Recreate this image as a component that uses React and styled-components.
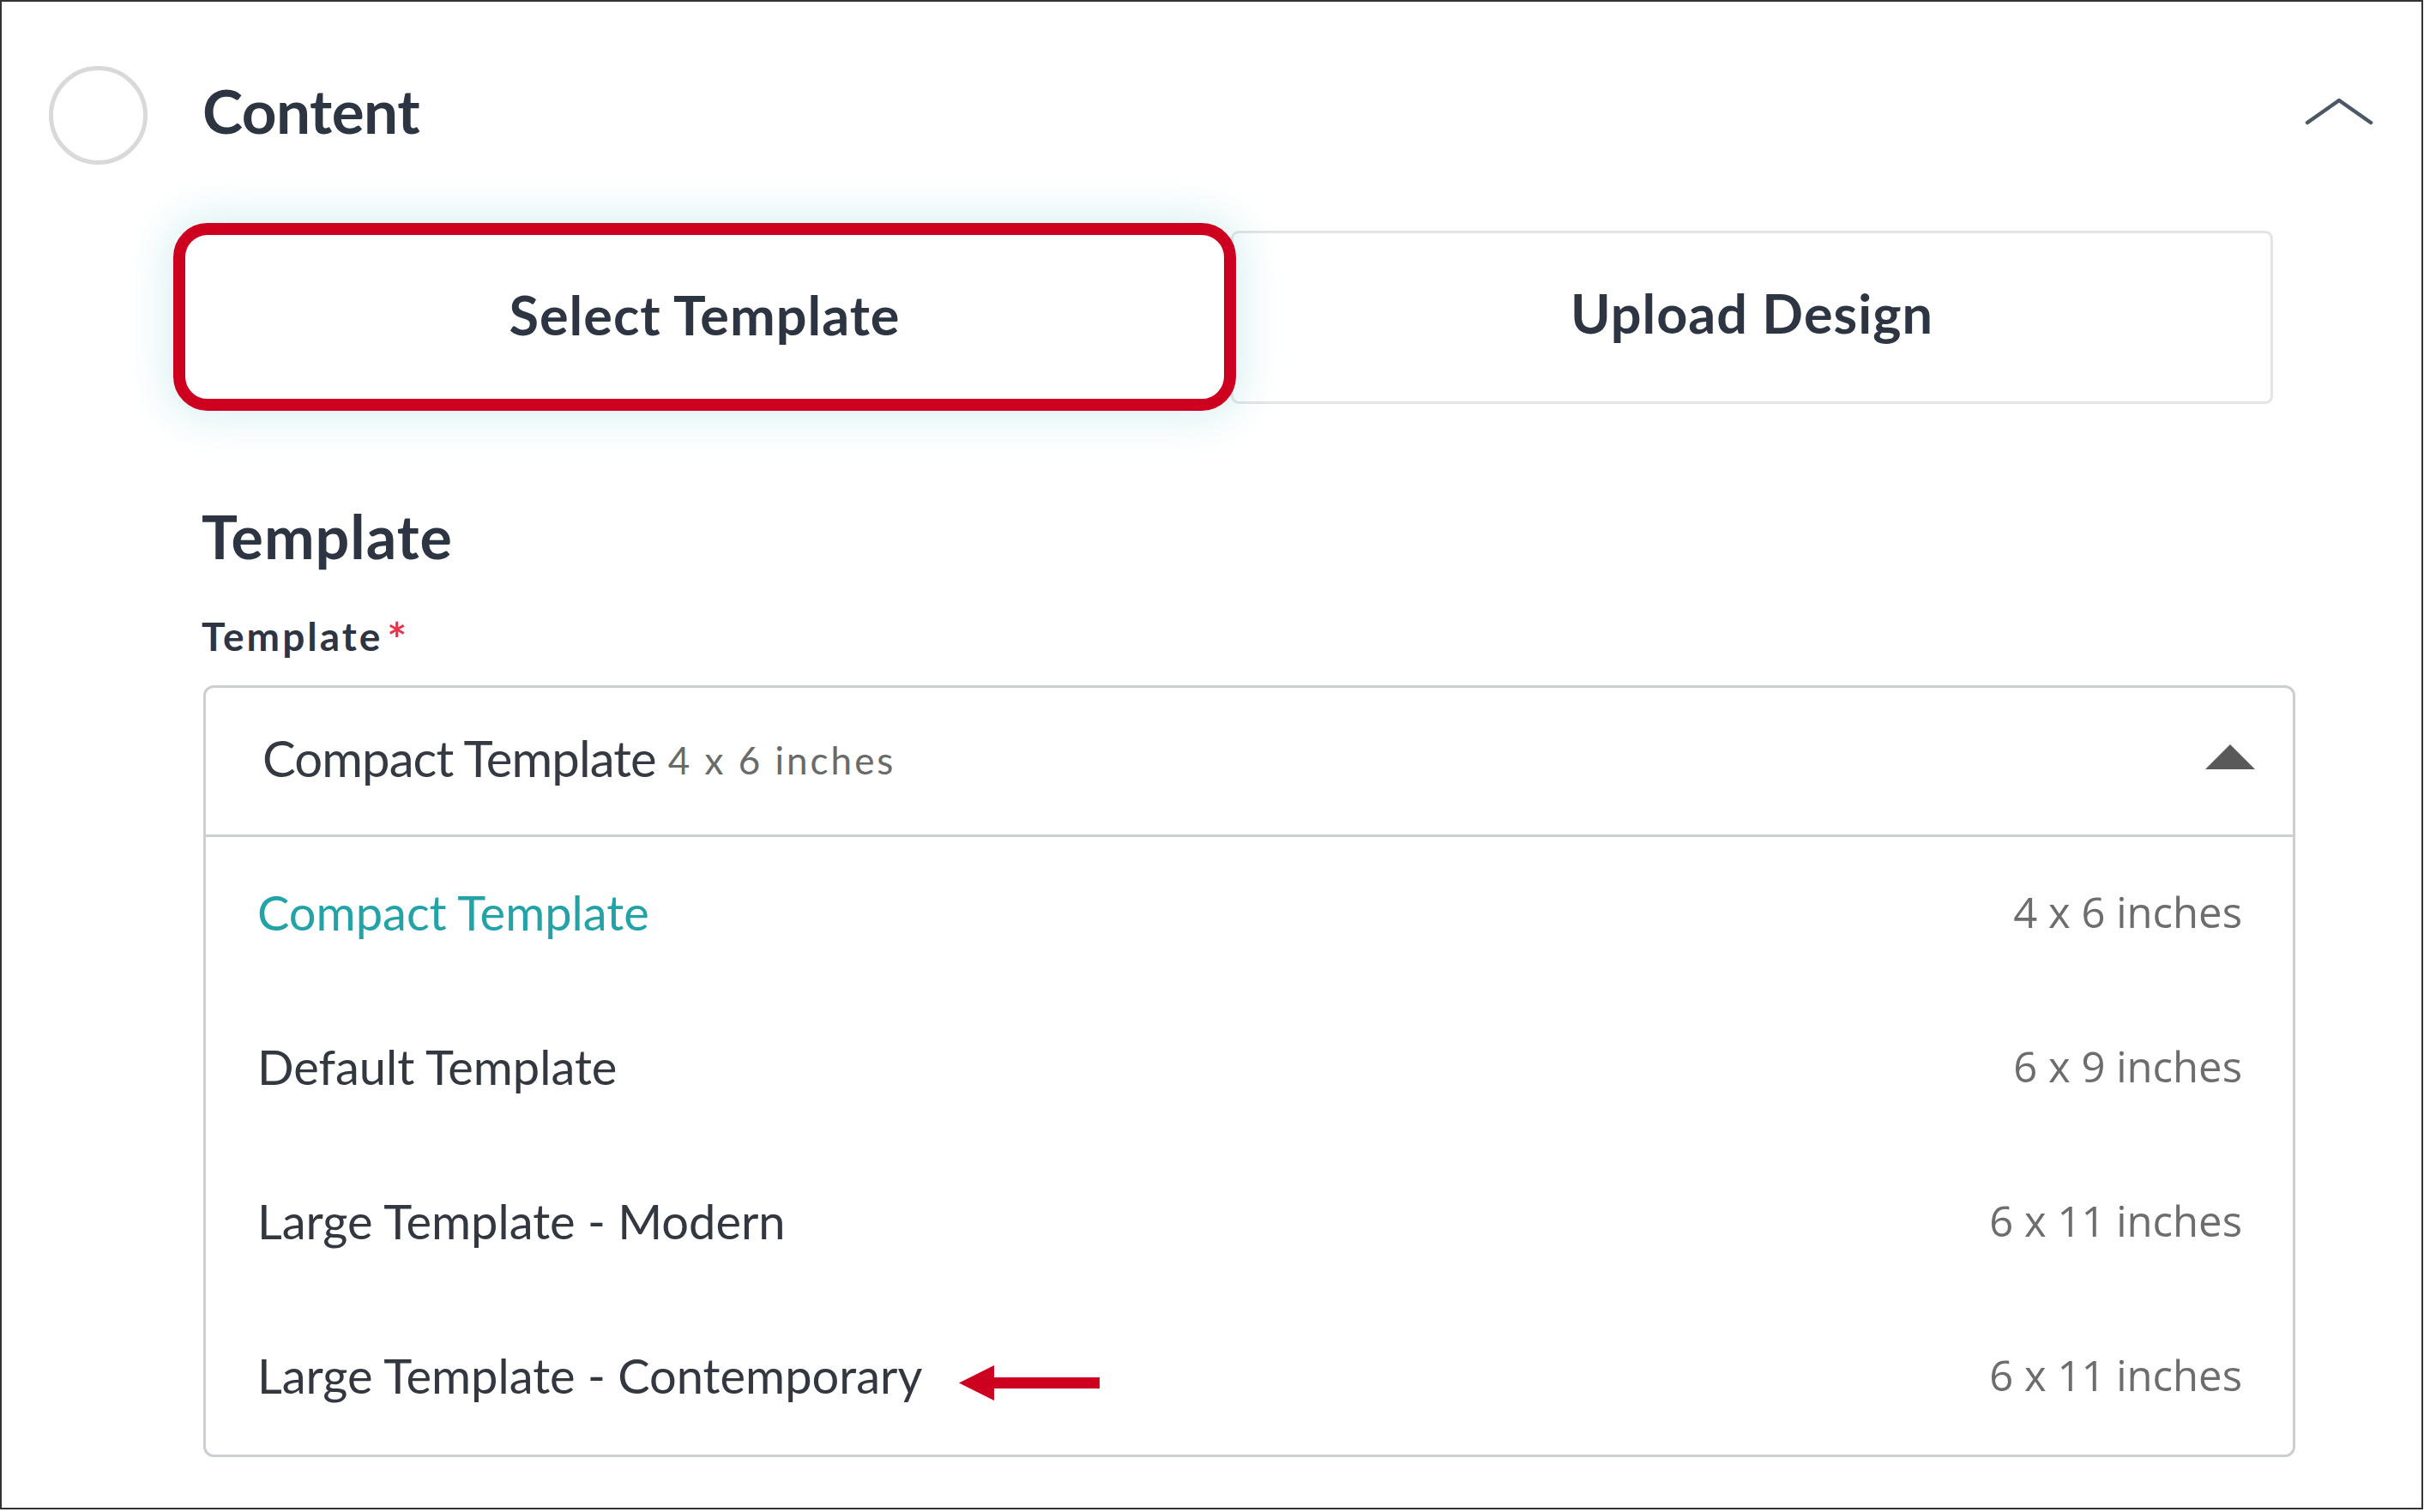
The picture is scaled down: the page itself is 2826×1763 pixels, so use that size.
import React, { useState } from "react";
import styled, { createGlobalStyle } from "styled-components";

const GlobalStyle = createGlobalStyle`
  * {
    box-sizing: border-box;
  }
  html,
  body {
    margin: 0;
    padding: 0;
    background: #ffffff;
  }
  body {
    font-family: "Lato", "Open Sans", sans-serif;
    color: #2d3442;
  }
`;

const Card = styled.div`
  width: 2825px;
  height: 1760px;
  border: 2px solid #333333;
  background: #ffffff;
  padding: 75px 56px 0 55px;
  overflow: hidden;
`;

const Header = styled.div`
  display: flex;
  align-items: center;
  height: 115px;
`;

const StatusCircle = styled.div`
  width: 115px;
  height: 115px;
  border-radius: 50%;
  border: 5px solid #d9d9dc;
  flex-shrink: 0;
`;

const SectionTitle = styled.h2`
  margin: 0 0 12px 64px;
  flex: 1;
  font-size: 71px;
  font-weight: 700;
  line-height: 1.2;
  color: #2d3442;
  letter-spacing: -0.5px;
`;

const CollapseButton = styled.button`
  border: none;
  background: none;
  padding: 0;
  margin-bottom: 9px;
  display: flex;
  cursor: pointer;
`;

const Body = styled.div`
  padding-left: 178px;
  padding-right: 86px;
`;

const TabRow = styled.div`
  display: flex;
  align-items: center;
  margin: 68px 0 0 -33px;
`;

const Tab = styled.button`
  font-family: "Lato", "Open Sans", sans-serif;
  font-size: 63px;
  font-weight: 700;
  letter-spacing: 1px;
  color: #2d3442;
  background: #ffffff;
  cursor: pointer;
  display: flex;
  align-items: center;
  justify-content: center;
  width: ${(p) => (p.$active ? "1239px" : "1215px")};
  height: ${(p) => (p.$active ? "219px" : "202px")};
  border: ${(p) => (p.$active ? "14px solid #cd001f" : "3px solid #e4e4e4")};
  border-radius: ${(p) => (p.$active ? "40px" : "9px")};
  margin-left: ${(p) => (p.$active ? "0" : "-6px")};
  position: relative;
  z-index: ${(p) => (p.$active ? 1 : 0)};
  box-shadow: ${(p) =>
    p.$active ? "0 0 46px 10px rgba(110, 196, 204, 0.24)" : "none"};
  padding: 0 0 ${(p) => (p.$active ? "6px" : "11px")};
`;

const SectionHeading = styled.h3`
  margin: 104px 0 0;
  font-size: 70px;
  font-weight: 700;
  line-height: 1.2;
  color: #2d3442;
  letter-spacing: 1px;
`;

const FieldLabel = styled.label`
  display: block;
  margin-top: 47px;
  font-size: 46px;
  font-weight: 700;
  line-height: 1.2;
  letter-spacing: 3px;
  color: #2d3442;
`;

const Required = styled.span`
  color: #e8334a;
  margin-left: 5px;
  font-size: 54px;
  line-height: 0;
  position: relative;
  top: 6px;
`;

const Select = styled.div`
  margin-top: 30px;
  margin-left: 2px;
  width: 2439px;
  border: 3px solid #cbcfd3;
  border-radius: 12px;
  background: #ffffff;
`;

const SelectHeader = styled.div`
  display: flex;
  align-items: center;
  height: 174px;
  padding: 0 43px 8px 66px;
  border-bottom: 3px solid #cbcfd3;
  cursor: pointer;
`;

const SelectValue = styled.div`
  flex: 1;
  font-size: 58px;
  font-weight: 400;
  color: #353a42;
  letter-spacing: -0.9px;
`;

const ValueSize = styled.span`
  font-size: 44px;
  color: #6a6a6a;
  margin-left: 14px;
  letter-spacing: 3px;
  position: relative;
  top: -3px;
`;

const Caret = styled.svg`
  margin-top: -2px;
`;

const OptionList = styled.ul`
  list-style: none;
  margin: 0;
  padding: 0;
`;

const OptionRow = styled.li`
  display: flex;
  align-items: center;
  height: 180px;
  padding: 0 59px 6px 60px;
  cursor: pointer;
`;

const OptionName = styled.span`
  font-size: 56px;
  font-weight: 400;
  letter-spacing: 0;
  color: ${(p) => (p.$selected ? "#22a3a8" : "#333740")};
`;

const OptionSize = styled.span`
  margin-left: auto;
  font-family: "Open Sans", "Lato", sans-serif;
  font-size: 49px;
  color: #6d6d6d;
`;

const PointerArrow = styled.svg`
  margin-left: 43px;
  transform: translateY(9px);
  flex-shrink: 0;
`;

const templates = [
  { name: "Compact Template", size: "4 x 6 inches" },
  { name: "Default Template", size: "6 x 9 inches" },
  { name: "Large Template - Modern", size: "6 x 11 inches" },
  { name: "Large Template - Contemporary", size: "6 x 11 inches", flagged: true },
];

export default function App() {
  const [tab, setTab] = useState("template");
  const [selected, setSelected] = useState(templates[0]);

  return (
    <>
      <GlobalStyle />
      <Card>
        <Header>
          <StatusCircle />
          <SectionTitle>Content</SectionTitle>
          <CollapseButton aria-label="Collapse">
            <svg width="80" height="32" viewBox="0 0 80 32" fill="none">
              <polyline
                points="3,29 40,3 77,29"
                stroke="#4d5866"
                strokeWidth="4.5"
                strokeLinecap="round"
                strokeLinejoin="round"
              />
            </svg>
          </CollapseButton>
        </Header>

        <Body>
          <TabRow>
            <Tab $active={tab === "template"} onClick={() => setTab("template")}>
              Select Template
            </Tab>
            <Tab $active={tab === "upload"} onClick={() => setTab("upload")}>
              Upload Design
            </Tab>
          </TabRow>

          <SectionHeading>Template</SectionHeading>
          <FieldLabel>
            Template<Required>*</Required>
          </FieldLabel>

          <Select>
            <SelectHeader>
              <SelectValue>
                {selected.name}
                <ValueSize>{selected.size}</ValueSize>
              </SelectValue>
              <Caret width="60" height="31" viewBox="0 0 60 31">
                <polygon points="30,1 59,30 1,30" fill="#595959" />
              </Caret>
            </SelectHeader>
            <OptionList>
              {templates.map((t) => (
                <OptionRow key={t.name} onClick={() => setSelected(t)}>
                  <OptionName $selected={t.name === selected.name}>
                    {t.name}
                  </OptionName>
                  {t.flagged && (
                    <PointerArrow width="164" height="41" viewBox="0 0 164 41">
                      <polygon
                        points="0,20.5 41,0 41,14 164,14 164,27 41,27 41,41"
                        fill="#cd001f"
                      />
                    </PointerArrow>
                  )}
                  <OptionSize>{t.size}</OptionSize>
                </OptionRow>
              ))}
            </OptionList>
          </Select>
        </Body>
      </Card>
    </>
  );
}
